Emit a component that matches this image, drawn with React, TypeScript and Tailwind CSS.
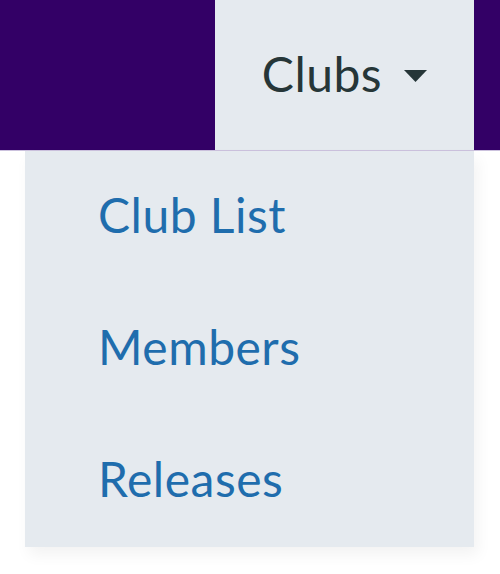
export default function App() {
  return (
    <div className="relative h-[574px] w-[500px] bg-white font-['Lato',sans-serif]">
      <nav className="flex h-[151px] justify-end border-b border-[#cbc1dd] bg-[#330066] pr-[26px]">
        <button className="flex h-[150px] w-[259px] items-center justify-center gap-[22px] bg-[#e5eaef] pb-[2px] text-[48px] tracking-[0.5px] text-[#263638]">
          <span>Clubs</span>
          <svg width="23" height="12" viewBox="0 0 23 12" className="mt-[4px]">
            <path d="M0 0h23L11.5 12z" fill="#263638" />
          </svg>
        </button>
      </nav>
      <ul className="absolute left-[25px] top-[151px] flex w-[449px] flex-col bg-[#e5eaef] shadow-[4px_8px_14px_rgba(0,0,0,0.05)]">
        {["Club List", "Members", "Releases"].map((label) => (
          <li key={label} className="flex h-[132px] items-center pb-[4px] pl-[73px]">
            <a href="#" className="text-[48px] tracking-[0.5px] text-[#1f6dad]">
              {label}
            </a>
          </li>
        ))}
      </ul>
    </div>
  );
}
